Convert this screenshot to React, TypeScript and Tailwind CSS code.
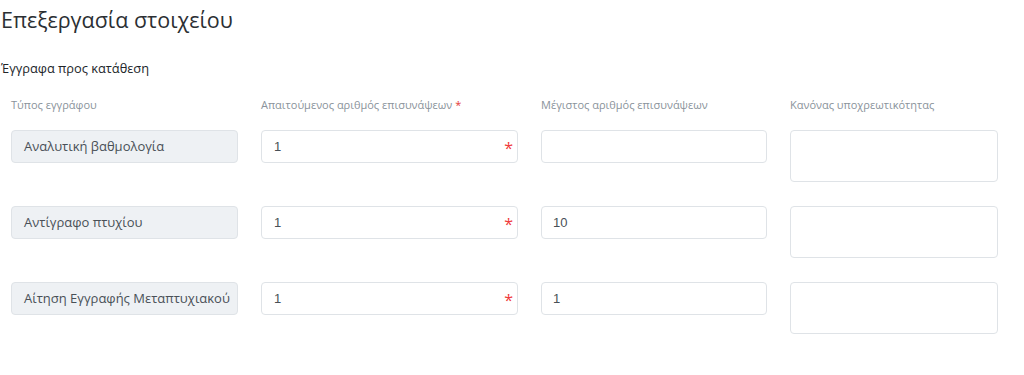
import React from "react";

interface Row {
  type: string;
  required: string;
  max: string;
}

const rows: Row[] = [
  { type: "Αναλυτική βαθμολογία", required: "1", max: "" },
  { type: "Αντίγραφο πτυχίου", required: "1", max: "10" },
  { type: "Αίτηση Εγγραφής Μεταπτυχιακού", required: "1", max: "1" },
];

export default function App() {
  return (
    <div
      className="min-h-[375px] w-[1024px] bg-white text-[#212529]"
      style={{ fontFamily: '"Open Sans", "Noto Sans", sans-serif' }}
    >
      <h1 className="pl-[1px] pt-[5px] text-[21.5px] font-normal leading-[30px] text-[#2b2f33]">
        Επεξεργασία στοιχείου
      </h1>

      <h2 className="mt-[24px] pl-[1px] text-[12.8px] leading-[18px]">
        Έγγραφα προς κατάθεση
      </h2>

      <div className="ml-[11px] mt-[20px] grid grid-cols-[227px_257px_226px_208px] gap-x-[23px]">
        {/* Headers */}
        <div className="text-[11px] leading-[16px] text-[#8a939b]">Τύπος εγγράφου</div>
        <div className="text-[11px] leading-[16px] text-[#8a939b]">
          Απαιτούμενος αριθμός επισυνάψεων <span className="text-[#e53935]">*</span>
        </div>
        <div className="text-[11px] leading-[16px] text-[#8a939b]">Μέγιστος αριθμός επισυνάψεων</div>
        <div className="text-[11px] leading-[16px] text-[#8a939b]">Κανόνας υποχρεωτικότητας</div>

        {rows.map((row, i) => (
          <React.Fragment key={i}>
            <div className={i === 0 ? "mt-[17px]" : "mt-[24px]"}>
              <div className="flex h-[33px] items-center overflow-hidden whitespace-nowrap rounded-[4px] border border-[#dfe3e7] bg-[#eef1f4] px-[12px] text-[13px] text-[#495057]">
                {row.type}
              </div>
            </div>
            <div className={i === 0 ? "mt-[17px]" : "mt-[24px]"}>
              <div className="relative flex h-[33px] items-center rounded-[4px] border border-[#dfe3e7] bg-white px-[12px] text-[13px] text-[#495057]">
                <span style={{ fontFamily: '"Liberation Sans", Arial, sans-serif' }}>{row.required}</span>
                <span className="absolute right-[4px] top-[9px] text-[16px] leading-[16px] text-[#f03a3a]">*</span>
              </div>
            </div>
            <div className={i === 0 ? "mt-[17px]" : "mt-[24px]"}>
              <div
                className="flex h-[33px] items-center rounded-[4px] border border-[#dfe3e7] bg-white px-[11px] text-[13px] text-[#495057]"
                style={{ fontFamily: '"Liberation Sans", Arial, sans-serif' }}
              >
                {row.max}
              </div>
            </div>
            <div className={i === 0 ? "mt-[17px]" : "mt-[24px]"}>
              <div className="h-[52px] rounded-[4px] border border-[#dfe3e7] bg-white" />
            </div>
          </React.Fragment>
        ))}
      </div>
    </div>
  );
}
